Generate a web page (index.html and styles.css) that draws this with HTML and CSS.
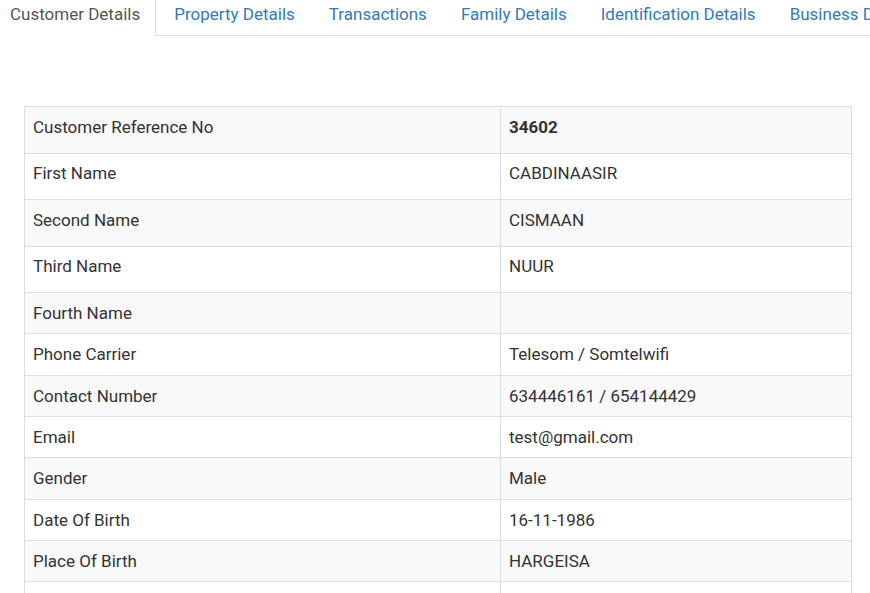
FILE: index.html
```html
<!DOCTYPE html>
<html>
<head>
    <title>Customer Details</title>
    <link rel="stylesheet" href="styles.css">
</head>
<body>
    <div class="page">
        <ul class="tabs">
            <li class="tab active"><a href="#">Customer Details</a></li>
            <li class="tab"><a href="#">Property Details</a></li>
            <li class="tab"><a href="#">Transactions</a></li>
            <li class="tab"><a href="#">Family Details</a></li>
            <li class="tab"><a href="#">Identification Details</a></li>
            <li class="tab"><a href="#">Business Details</a></li>
        </ul>

        <div class="content">
            <table class="details">
                <tr class="tall"><td class="label">Customer Reference No</td><td><b>34602</b></td></tr>
                <tr class="tall"><td class="label">First Name</td><td>CABDINAASIR</td></tr>
                <tr class="tall"><td class="label">Second Name</td><td>CISMAAN</td></tr>
                <tr class="tall"><td class="label">Third Name</td><td>NUUR</td></tr>
                <tr><td class="label">Fourth Name</td><td></td></tr>
                <tr><td class="label">Phone Carrier</td><td>Telesom / Somtelwifi</td></tr>
                <tr><td class="label">Contact Number</td><td>634446161 / 654144429</td></tr>
                <tr><td class="label">Email</td><td>test@gmail.com</td></tr>
                <tr><td class="label">Gender</td><td>Male</td></tr>
                <tr><td class="label">Date Of Birth</td><td>16-11-1986</td></tr>
                <tr><td class="label">Place Of Birth</td><td>HARGEISA</td></tr>
                <tr><td class="label">Nationality</td><td>SOMALILAND</td></tr>
            </table>
        </div>
    </div>
</body>
</html>
```

FILE: styles.css
```css
* {
    margin: 0;
    padding: 0;
    box-sizing: border-box;
}

body {
    font-family: Roboto, "Liberation Sans", sans-serif;
    font-size: 17px;
    line-height: 1.42857;
    color: #333;
    background: #fff;
    overflow: hidden;
}

div.page {
    width: 870px;
    height: 593px;
    overflow: hidden;
}

ul.tabs {
    list-style: none;
    display: flex;
    white-space: nowrap;
    margin-left: -6px;
    margin-top: -10px;
    border-bottom: 1px solid #ddd;
}

ul.tabs li.tab {
    margin-right: 2px;
    margin-bottom: -1px;
}

ul.tabs li.tab a {
    display: block;
    padding: 11px 15px 9px;
    border: 1px solid transparent;
    border-radius: 4px 4px 0 0;
    color: #337ab7;
    text-decoration: none;
}

ul.tabs li.active a {
    color: #555;
    background: #fff;
    border-color: #ddd;
    border-bottom-color: transparent;
}

div.content {
    padding: 70px 18px 0 24px;
}

table.details {
    width: 828px;
    border-collapse: collapse;
    border: 1px solid #ddd;
}

table.details td {
    border: 1px solid #ddd;
    padding: 8px;
    vertical-align: top;
}

table.details td.label {
    width: 476px;
}

table.details tr.tall td {
    padding: 7.6px 8px 13.6px;
}

table.details tr:nth-child(odd) td {
    background: #f9f9f9;
}
```
